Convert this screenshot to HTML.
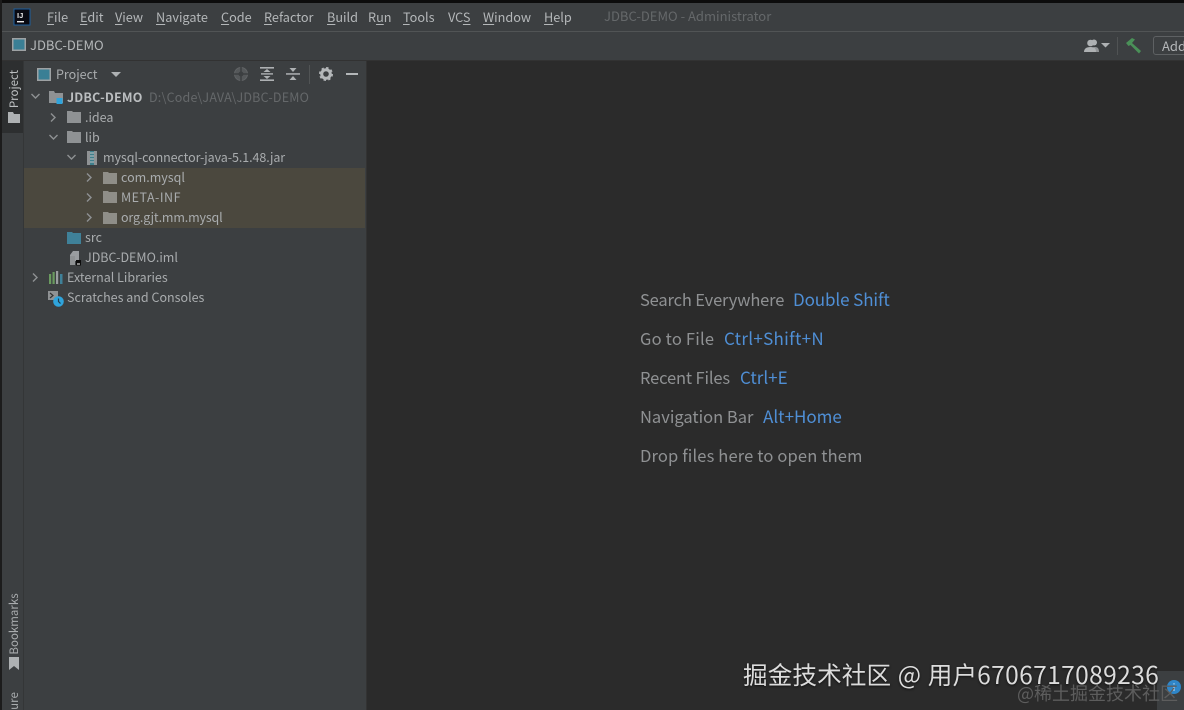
<!DOCTYPE html>
<html><head><meta charset="utf-8">
<style>
html,body{margin:0;padding:0;background:#2b2b2b}
#r{position:relative;width:1184px;height:710px;overflow:hidden;background:#2b2b2b;font-family:"Noto Sans CJK SC","Liberation Sans",sans-serif;color:#b4b7b9;filter:blur(.35px)}
.a{position:absolute}
.t{position:absolute;white-space:nowrap;font-size:12.5px;line-height:18px;color:#a9acae}
.m{position:absolute;top:8px;white-space:nowrap;font-size:12.7px;line-height:18px;color:#b4b7b9}
.m u{text-underline-offset:2px}
.w{position:absolute;white-space:nowrap;font-size:16.5px;line-height:22px;color:#8f9193}
.b{position:absolute;white-space:nowrap;font-size:17px;line-height:22px;color:#4f8fd6}
svg{position:absolute;overflow:visible}
</style></head><body><div id="r">
<div class="a" style="left:0;top:0;width:1184px;height:3px;background:#0c0c0c"></div>
<div class="a" style="left:0;top:3px;width:1184px;height:28px;background:#3c3f41"></div>
<div class="a" style="left:0;top:31px;width:1184px;height:1px;background:#515455"></div>
<div class="a" style="left:0;top:32px;width:1184px;height:28px;background:#3c3f41"></div>
<div class="a" style="left:0;top:60px;width:1184px;height:1px;background:#323232"></div>
<div class="a" style="left:0;top:0;width:2px;height:710px;background:#1c1c1c"></div>

<svg style="left:14px;top:9px" width="16" height="16"><rect width="16" height="16" fill="#0a0a12" stroke="#1d5f9e" stroke-width="1"/><text x="3" y="9" font-size="7.5" font-weight="bold" fill="#e8e8e8" font-family="Liberation Sans">IJ</text><rect x="3" y="12" width="7" height="1.4" fill="#e8e8e8"/></svg>
<div class="m" style="left:47px"><u>F</u>ile</div>
<div class="m" style="left:80px"><u>E</u>dit</div>
<div class="m" style="left:115px"><u>V</u>iew</div>
<div class="m" style="left:156px"><u>N</u>avigate</div>
<div class="m" style="left:221px"><u>C</u>ode</div>
<div class="m" style="left:264px"><u>R</u>efactor</div>
<div class="m" style="left:327px"><u>B</u>uild</div>
<div class="m" style="left:368px">R<u>u</u>n</div>
<div class="m" style="left:403px"><u>T</u>ools</div>
<div class="m" style="left:448px">VC<u>S</u></div>
<div class="m" style="left:483px"><u>W</u>indow</div>
<div class="m" style="left:544px"><u>H</u>elp</div>
<div class="m" style="left:604px;top:7px;color:#65686a;font-size:13px">JDBC-DEMO - Administrator</div>

<svg style="left:12px;top:38px" width="14" height="13"><rect x=".75" y=".75" width="12.5" height="11.5" fill="#3a7f95" stroke="#9ea2a4" stroke-width="1.5"/></svg>
<div class="t" style="left:30px;top:36px;color:#b4b7b9;font-size:13px">JDBC-DEMO</div>

<svg style="left:1084px;top:39px" width="26" height="14" fill="#aeb1b3"><circle cx="10" cy="3.500" r="3"/><path d="M6 13c0-3 2-5 5-5s4 2 4 5z" opacity=".75"/><circle cx="6.500" cy="4" r="3.300"/><path d="M0 13c0-3 2-5 6.500-5S12 10 12 13z"/><path d="M17 4h9l-4.500 4.500z"/></svg>
<div class="a" style="left:1117px;top:37px;width:1px;height:18px;background:#505354"></div>
<svg style="left:1125px;top:37px" width="18" height="17"><path d="M1 6L7 1l3 1.500L7 6l9 8-2 2.500L5.500 8 3.500 9z" fill="#4a9058"/></svg>
<div class="a" style="left:1153px;top:36px;width:40px;height:19px;border:1px solid #5e6163;border-radius:3px;box-sizing:border-box"></div>
<div class="t" style="left:1162px;top:37px;color:#b4b7b9;font-size:13px">Add</div>

<div class="a" style="left:2px;top:61px;width:22px;height:649px;background:#3c3f41"></div>
<div class="a" style="left:2px;top:61px;width:22px;height:72px;background:#2d2f30"></div>
<div class="t" style="left:14px;top:89px;color:#bcbfc1;font-size:11.5px;transform:translate(-50%,-50%) rotate(-90deg)">Project</div>
<svg style="left:8px;top:112px" width="12" height="11"><path d="M0 0h5l1 2h6v9H0z" fill="#aeb1b3"/></svg>
<div class="t" style="left:14px;top:624px;color:#a9acae;font-size:11.5px;transform:translate(-50%,-50%) rotate(-90deg)">Bookmarks</div>
<svg style="left:9px;top:657px" width="10" height="13"><path d="M0 0h10v13l-5-4-5 4z" fill="#aeb1b3"/></svg>
<div class="t" style="left:14px;top:701px;color:#a9acae;font-size:11.5px;transform:translate(-50%,-50%) rotate(-90deg)">ure</div>
<div class="a" style="left:23px;top:61px;width:1px;height:649px;background:#343637"></div>

<div class="a" style="left:24px;top:61px;width:342px;height:649px;background:#3c3f41"></div>
<div class="a" style="left:366px;top:61px;width:1px;height:649px;background:#333"></div>
<div class="a" style="left:24px;top:168px;width:341px;height:60px;background:#4b483e"></div>

<svg style="left:37px;top:68px" width="14" height="13"><rect x=".75" y=".75" width="12.5" height="11.5" fill="#3a7f95" stroke="#9ea2a4" stroke-width="1.5"/></svg>
<div class="t" style="left:56px;top:65px">Project</div>
<svg style="left:111px;top:72px" width="10" height="6"><path d="M0 0h10l-5 5z" fill="#aeb1b3"/></svg>
<svg style="left:233px;top:66px" width="16" height="16"><circle cx="8" cy="8" r="6.5" fill="#55585a" stroke="#606365"/><path d="M8 1v14M1 8h14" stroke="#3c3f41" stroke-width="1.5"/><circle cx="8" cy="8" r="2.5" fill="#3c3f41"/></svg>
<svg style="left:260px;top:67px" width="14" height="14" fill="#aeb1b3"><rect width="14" height="1.6"/><rect y="12.4" width="14" height="1.6"/><rect x="1" y="6.2" width="12" height="1.4"/><path d="M7 2l3.5 3h-7zM7 12l3.500-3h-7z"/></svg>
<svg style="left:286px;top:67px" width="14" height="14" fill="#aeb1b3"><rect y="6.200" width="14" height="1.500"/><path d="M3.500 1h7L7 5zM7 9l3.500 4h-7z"/></svg>
<div class="a" style="left:309px;top:65px;width:1px;height:19px;background:#515455"></div>
<svg style="left:319px;top:67px" width="14" height="14"><circle cx="7" cy="7" r="4.300" fill="none" stroke="#b4b7b9" stroke-width="3"/><circle cx="7" cy="7" r="6" fill="none" stroke="#b4b7b9" stroke-width="2" stroke-dasharray="2.400 2.300"/></svg>
<div class="a" style="left:346px;top:73px;width:12px;height:2px;background:#b4b7b9"></div>

<svg style="left:31px;top:93px" width="9" height="7" fill="none" stroke="#8e9193" stroke-width="1.400"><path d="M.5 1l4 4 4-4"/></svg>
<svg style="left:49px;top:90px" width="16" height="16"><path d="M0 1h5l1 2h8v10H0z" fill="#8f9294"/><rect x="7.500" y="8" width="6" height="6" fill="#2fa4dc"/></svg>
<div class="t" style="left:67px;top:88px;font-weight:bold;color:#bbbec0;letter-spacing:.2px">JDBC-DEMO</div>
<div class="t" style="left:149px;top:88px;color:#65686a;letter-spacing:.2px">D:\Code\JAVA\JDBC-DEMO</div>

<svg style="left:50px;top:113px" width="7" height="9" fill="none" stroke="#8e9193" stroke-width="1.400"><path d="M1 .5l4 4-4 4"/></svg>
<svg style="left:67px;top:111px" width="14" height="12"><path d="M0 0h5l1 1h8v11H0z" fill="#8f9294"/></svg>
<div class="t" style="left:85px;top:108px">.idea</div>

<svg style="left:49px;top:134px" width="9" height="7" fill="none" stroke="#8e9193" stroke-width="1.400"><path d="M.5 1l4 4 4-4"/></svg>
<svg style="left:67px;top:131px" width="14" height="12"><path d="M0 0h5l1 1h8v11H0z" fill="#8f9294"/></svg>
<div class="t" style="left:85px;top:128px">lib</div>

<svg style="left:67px;top:154px" width="9" height="7" fill="none" stroke="#8e9193" stroke-width="1.400"><path d="M.5 1l4 4 4-4"/></svg>
<svg style="left:87px;top:151px" width="10" height="14"><rect width="10" height="14" fill="#8f9294"/><path d="M3 0h4v14H3z" fill="#3f7f8c"/><path d="M3 2h4M3 5h4M3 8h4M3 11h4" stroke="#c0c3c5"/></svg>
<div class="t" style="left:103px;top:148px;letter-spacing:-.08px">mysql-connector-java-5.1.48.jar</div>

<svg style="left:86px;top:173px" width="7" height="9" fill="none" stroke="#8e9193" stroke-width="1.400"><path d="M1 .5l4 4-4 4"/></svg>
<svg style="left:103px;top:172px" width="14" height="12"><path d="M0 0h5l1 1h8v11H0z" fill="#8f8e88"/></svg>
<div class="t" style="left:121px;top:168px">com.mysql</div>
<svg style="left:86px;top:193px" width="7" height="9" fill="none" stroke="#8e9193" stroke-width="1.400"><path d="M1 .5l4 4-4 4"/></svg>
<svg style="left:103px;top:191px" width="14" height="12"><path d="M0 0h5l1 1h8v11H0z" fill="#8f8e88"/></svg>
<div class="t" style="left:121px;top:188px;letter-spacing:.5px">META-INF</div>
<svg style="left:86px;top:213px" width="7" height="9" fill="none" stroke="#8e9193" stroke-width="1.400"><path d="M1 .5l4 4-4 4"/></svg>
<svg style="left:103px;top:212px" width="14" height="12"><path d="M0 0h5l1 1h8v11H0z" fill="#8f8e88"/></svg>
<div class="t" style="left:121px;top:208px;letter-spacing:-.15px">org.gjt.mm.mysql</div>

<svg style="left:67px;top:232px" width="14" height="12"><path d="M0 0h5l1 1h8v11H0z" fill="#3f8199"/></svg>
<div class="t" style="left:85px;top:228px">src</div>
<svg style="left:69px;top:250px" width="12" height="16"><path d="M4 1h6v10H1V5z" fill="#9a9da0"/><path d="M1 6h5v9H1z" fill="#8f9294"/><rect x="7" y="10" width="5" height="5.500" fill="#0c0c0c"/><rect x="8" y="13.500" width="3" height="1" fill="#fff"/></svg>
<div class="t" style="left:85px;top:248px">JDBC-DEMO.iml</div>

<svg style="left:32px;top:273px" width="7" height="9" fill="none" stroke="#8e9193" stroke-width="1.400"><path d="M1 .5l4 4-4 4"/></svg>
<svg style="left:49px;top:271px" width="14" height="13"><rect y="3" width="2.200" height="10" fill="#6a9a5f"/><rect x="3.500" y="1" width="2.200" height="12" fill="#6a9a5f"/><rect x="7" y="0" width="2.200" height="13" fill="#9a9da0"/><rect x="11" y="3" width="2.500" height="10" fill="#3f8199"/></svg>
<div class="t" style="left:67px;top:268px">External Libraries</div>
<svg style="left:48px;top:291px" width="16" height="16"><rect width="10" height="9" fill="#8f9294"/><path d="M2 2l3 2.500L2 7" fill="none" stroke="#333" stroke-width="1.200"/><circle cx="10.500" cy="10.500" r="5.300" fill="#2fa4dc"/><path d="M10.500 7.500v3l2 2" fill="none" stroke="#1d3a4a" stroke-width="1.200"/></svg>
<div class="t" style="left:67px;top:288px">Scratches and Consoles</div>

<div class="w" style="left:640px;top:288px;letter-spacing:-.15px">Search Everywhere</div><div class="b" style="left:793px;top:288px;letter-spacing:-.1px">Double Shift</div>
<div class="w" style="left:640px;top:327px;letter-spacing:.2px">Go to File</div><div class="b" style="left:724px;top:327px;letter-spacing:.3px">Ctrl+Shift+N</div>
<div class="w" style="left:640px;top:366px;letter-spacing:-.15px">Recent Files</div><div class="b" style="left:740px;top:366px">Ctrl+E</div>
<div class="w" style="left:640px;top:405px">Navigation Bar</div><div class="b" style="left:763px;top:405px">Alt+Home</div>
<div class="w" style="left:640px;top:444px;letter-spacing:.15px">Drop files here to open them</div>

<div class="a" style="left:1157px;top:671px;width:27px;height:39px;background:#3c3f41"></div>
<div class="a" style="left:1167px;top:680px;width:14px;height:14px;border-radius:7px;background:#2f86c9;color:#cfe6f7;font-size:10px;line-height:14px;text-align:center">i</div>
<div class="a" style="left:743px;top:657px;white-space:nowrap;font-size:24.600px;line-height:34px;color:#dcdcdc;word-spacing:1px;letter-spacing:.1px;text-shadow:0 1px 2px #111">掘金技术社区 @ 用户<span style="letter-spacing:.35px">6706717089236</span></div>
<div class="a" style="left:1017px;top:680px;white-space:nowrap;font-size:18px;line-height:26px;color:#5d5d5d">@稀土掘金技术社区</div>
</div></body></html>
